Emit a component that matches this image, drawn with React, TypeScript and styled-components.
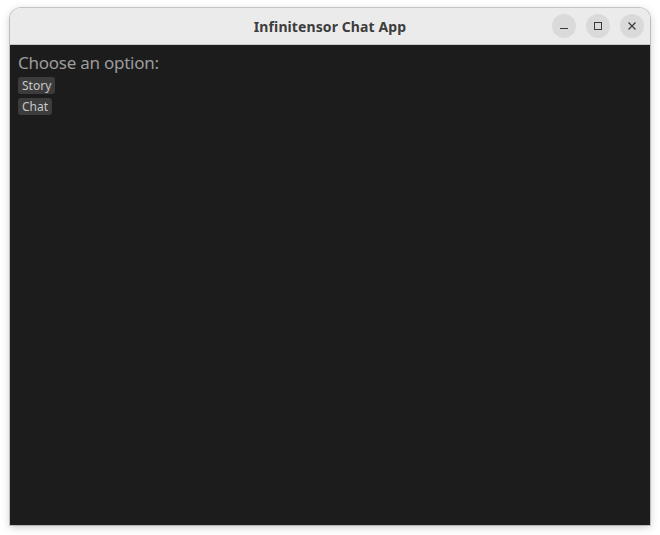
import React from "react";
import styled, { createGlobalStyle } from "styled-components";

const Global = createGlobalStyle`
  html, body { margin: 0; padding: 0; background: #ffffff; }
  body { width: 660px; height: 535px; overflow: hidden; }
`;

const Page = styled.div`
  width: 660px;
  height: 535px;
  box-sizing: border-box;
  padding: 8px 10px 10px 10px;
  display: flex;
`;

const Window = styled.div`
  flex: 1;
  display: flex;
  flex-direction: column;
  border-radius: 11px 11px 0 0;
  overflow: hidden;
  box-shadow: 0 0 0 1px rgba(0, 0, 0, 0.18), 0 2px 9px rgba(0, 0, 0, 0.22);
`;

const TitleBar = styled.div`
  height: 36px;
  flex: none;
  background: #ebebeb;
  border-bottom: 1px solid #c8c8c8;
  position: relative;
  display: flex;
  align-items: center;
  justify-content: center;
`;

const Title = styled.div`
  font-family: "Noto Sans", "DejaVu Sans", sans-serif;
  font-weight: 700;
  font-size: 14px;
  color: #3d3d3d;
  letter-spacing: 0.1px;
`;

const Controls = styled.div`
  position: absolute;
  right: 6px;
  top: 6px;
  display: flex;
  gap: 10px;
`;

const CtrlButton = styled.div`
  width: 24px;
  height: 24px;
  border-radius: 50%;
  background: #dadada;
  display: flex;
  align-items: center;
  justify-content: center;
`;

const Content = styled.div`
  flex: 1;
  background: #1c1c1c;
  padding: 7px 8px;
  display: flex;
  flex-direction: column;
  align-items: flex-start;
  gap: 4px;
`;

const Prompt = styled.div`
  font-family: "Noto Sans", "Open Sans", sans-serif;
  font-size: 17px;
  letter-spacing: -0.25px;
  color: #9c9c9c;
  line-height: 21px;
`;

const OptionButton = styled.button`
  font-family: "Noto Sans", "Open Sans", sans-serif;
  font-size: 12px;
  color: #c8c8c8;
  background: #3c3c3c;
  border: none;
  border-radius: 3px;
  padding: 0 4px;
  height: 17px;
  line-height: 17px;
  cursor: pointer;
`;

export default function App() {
  return (
    <>
      <Global />
      <Page>
        <Window>
          <TitleBar>
            <Title>Infinitensor Chat App</Title>
            <Controls>
              <CtrlButton>
                <svg width="10" height="10" viewBox="0 0 10 10">
                  <line x1="1" y1="7.5" x2="9" y2="7.5" stroke="#3a3a3a" strokeWidth="1" />
                </svg>
              </CtrlButton>
              <CtrlButton>
                <svg width="10" height="10" viewBox="0 0 10 10">
                  <rect x="1.5" y="1.5" width="7" height="7" fill="none" stroke="#3a3a3a" strokeWidth="1" />
                </svg>
              </CtrlButton>
              <CtrlButton>
                <svg width="10" height="10" viewBox="0 0 10 10">
                  <path d="M1.5 1.5 L8.5 8.5 M8.5 1.5 L1.5 8.5" stroke="#3a3a3a" strokeWidth="1.2" />
                </svg>
              </CtrlButton>
            </Controls>
          </TitleBar>
          <Content>
            <Prompt>Choose an option:</Prompt>
            <OptionButton>Story</OptionButton>
            <OptionButton>Chat</OptionButton>
          </Content>
        </Window>
      </Page>
    </>
  );
}
